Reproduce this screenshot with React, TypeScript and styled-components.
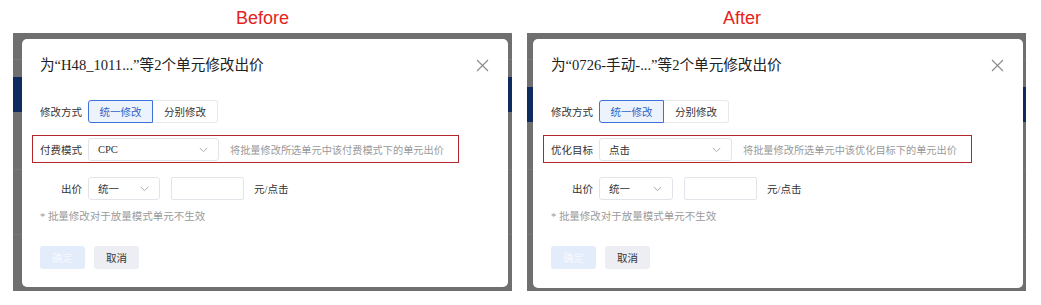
import React from "react";
import styled, { createGlobalStyle } from "styled-components";

const Global = createGlobalStyle`
  html, body { margin: 0; padding: 0; background: #ffffff; }
  body { width: 1041px; height: 305px; overflow: hidden; }
  * { box-sizing: border-box; }
`;

const SERIF = `"Liberation Serif", "Noto Sans CJK SC", serif`;
const SANS = `"Liberation Sans", "Noto Sans CJK SC", sans-serif`;

const Page = styled.div`
  display: flex;
  gap: 15px;
  padding-left: 13px;
`;

const Panel = styled.section`
  display: flex;
  flex-direction: column;
  width: 499px;
`;

const Caption = styled.div<{ $shift: number }>`
  height: 33px;
  display: flex;
  align-items: center;
  justify-content: center;
  padding-top: 4px;
  padding-right: ${(p) => p.$shift}px;
  font-family: ${SANS};
  font-size: 18px;
  color: #e3231c;
`;

const Backdrop = styled.div<{ $pad: string; $band: number }>`
  height: 258px;
  display: flex;
  padding: ${(p) => p.$pad};
  background:
    linear-gradient(
      to bottom,
      transparent 0,
      transparent ${(p) => p.$band}px,
      #0e2b5d ${(p) => p.$band}px,
      #0e2b5d ${(p) => p.$band + 35}px,
      transparent ${(p) => p.$band + 35}px
    ),
    linear-gradient(
      to bottom,
      #6f6f6f 0,
      #6f6f6f 26px,
      #7a7a7a 26px,
      #7a7a7a 27px,
      #6f6f6f 27px,
      #6f6f6f 136px,
      #787878 136px,
      #787878 137px,
      #6f6f6f 137px,
      #6f6f6f 201px,
      #777777 201px,
      #777777 202px,
      #6f6f6f 202px
    );
`;

const Dialog = styled.div`
  flex: 1;
  background: #ffffff;
  border-radius: 5px;
  padding: 15px 19px 18px 18px;
  display: flex;
  flex-direction: column;
  font-family: ${SERIF};
  color: #333;
`;

const TitleBar = styled.div`
  height: 22px;
  display: flex;
  align-items: center;
  justify-content: space-between;
`;

const Title = styled.h2`
  margin: 0;
  font-family: ${SERIF};
  font-weight: 400;
  font-size: 14.6px;
  line-height: 22px;
  color: #222;
`;

const CloseIcon = () => (
  <svg width="13" height="13" viewBox="0 0 13 13" aria-hidden>
    <path d="M1 1 L12 12 M12 1 L1 12" stroke="#8a8a8a" strokeWidth="1.1" fill="none" />
  </svg>
);

const Chevron = () => (
  <svg width="9" height="6" viewBox="0 0 9 6" aria-hidden>
    <path d="M0.8 1 L4.5 4.6 L8.2 1" stroke="#a0a0a0" strokeWidth="0.9" fill="none" />
  </svg>
);

const FormRow = styled.div<{ $mt: number }>`
  display: flex;
  align-items: center;
  height: 23px;
  margin-top: ${(p) => p.$mt}px;
`;

const Highlight = styled.div<{ $mt: number }>`
  align-self: flex-start;
  display: flex;
  align-items: center;
  margin-top: ${(p) => p.$mt}px;
  margin-left: -8px;
  padding: 2px 14px 1px 7px;
  border: 1px solid #b3262c;
`;

const Label = styled.span`
  width: 42px;
  margin-right: 6px;
  text-align: right;
  font-size: 10.5px;
  color: #333;
  white-space: nowrap;
`;

const Segmented = styled.div`
  display: flex;
`;

const SegButton = styled.button<{ $active?: boolean }>`
  width: 65px;
  height: 23px;
  padding: 0;
  font-family: ${SERIF};
  font-size: 10.5px;
  cursor: pointer;
  color: ${(p) => (p.$active ? "#2d63c8" : "#333")};
  background: ${(p) => (p.$active ? "#edf3fd" : "#fff")};
  border: 1px solid ${(p) => (p.$active ? "#3f72d6" : "#e6e8ec")};
  border-radius: ${(p) => (p.$active ? "3px 0 0 3px" : "0 3px 3px 0")};
  ${(p) => (p.$active ? "" : "border-left: none;")}
`;

const Select = styled.div<{ $w: number }>`
  width: ${(p) => p.$w}px;
  height: 23px;
  display: flex;
  align-items: center;
  justify-content: space-between;
  padding: 0 10px 0 9px;
  border: 1px solid #e2e4e9;
  border-radius: 3px;
  background: #fff;
  font-size: 10.5px;
  color: #333;
`;

const Hint = styled.span`
  margin-left: 11px;
  font-size: 10.2px;
  color: #9a9a9a;
  white-space: nowrap;
`;

const Input = styled.div`
  width: 73px;
  height: 23px;
  margin-left: 11px;
  border: 1px solid #e2e4e9;
  border-radius: 2px;
  background: #fff;
`;

const Unit = styled.span`
  margin-left: 10px;
  font-size: 10.5px;
  color: #333;
`;

const Note = styled.p`
  margin: 9px 0 0;
  font-size: 10.5px;
  line-height: 16px;
  color: #9a9a9a;
`;

const Actions = styled.div`
  display: flex;
  gap: 9px;
  margin-top: 21px;
`;

const ActionButton = styled.button<{ $primary?: boolean }>`
  width: 45px;
  height: 23px;
  padding: 0;
  border: none;
  border-radius: 3px;
  font-family: ${SANS};
  font-size: 10.5px;
  background: ${(p) => (p.$primary ? "#e3ecfb" : "#eceef3")};
  color: ${(p) => (p.$primary ? "#f7f9fe" : "#333")};
`;

type Variant = {
  caption: string;
  captionShift: number;
  pad: string;
  band: number;
  title: string;
  fieldLabel: string;
  fieldValue: string;
  fieldWidth: number;
  hint: string;
  bidWidth: number;
};

const variants: Variant[] = [
  {
    caption: "Before",
    captionShift: 0,
    pad: "6px 4px 4px 9px",
    band: 44,
    title: "为“H48_1011...”等2个单元修改出价",
    fieldLabel: "付费模式",
    fieldValue: "CPC",
    fieldWidth: 131,
    hint: "将批量修改所选单元中该付费模式下的单元出价",
    bidWidth: 72,
  },
  {
    caption: "After",
    captionShift: 69,
    pad: "6px 3px 3px 6px",
    band: 54,
    title: "为“0726-手动-...”等2个单元修改出价",
    fieldLabel: "优化目标",
    fieldValue: "点击",
    fieldWidth: 133,
    hint: "将批量修改所选单元中该优化目标下的单元出价",
    bidWidth: 74,
  },
];

const BidDialog = ({ v }: { v: Variant }) => (
  <Dialog>
    <TitleBar>
      <Title>{v.title}</Title>
      <CloseIcon />
    </TitleBar>
    <FormRow $mt={24}>
      <Label>修改方式</Label>
      <Segmented>
        <SegButton $active>统一修改</SegButton>
        <SegButton>分别修改</SegButton>
      </Segmented>
    </FormRow>
    <Highlight $mt={12}>
      <Label>{v.fieldLabel}</Label>
      <Select $w={v.fieldWidth}>
        <span>{v.fieldValue}</span>
        <Chevron />
      </Select>
      <Hint>{v.hint}</Hint>
    </Highlight>
    <FormRow $mt={14}>
      <Label>出价</Label>
      <Select $w={v.bidWidth}>
        <span>统一</span>
        <Chevron />
      </Select>
      <Input />
      <Unit>元/点击</Unit>
    </FormRow>
    <Note>* 批量修改对于放量模式单元不生效</Note>
    <Actions>
      <ActionButton $primary>确定</ActionButton>
      <ActionButton>取消</ActionButton>
    </Actions>
  </Dialog>
);

export default function App() {
  return (
    <>
      <Global />
      <Page>
        {variants.map((v) => (
          <Panel key={v.caption}>
            <Caption $shift={v.captionShift}>{v.caption}</Caption>
            <Backdrop $pad={v.pad} $band={v.band}>
              <BidDialog v={v} />
            </Backdrop>
          </Panel>
        ))}
      </Page>
    </>
  );
}
